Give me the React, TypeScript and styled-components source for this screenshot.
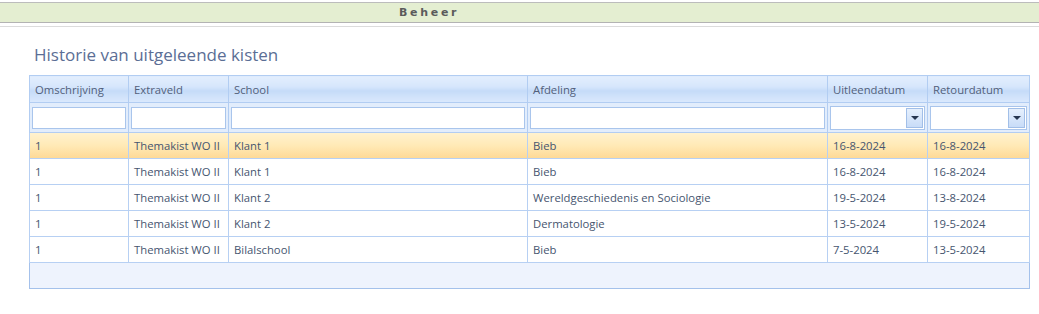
import styled, { createGlobalStyle } from 'styled-components';

const GlobalStyle = createGlobalStyle`
  body {
    margin: 0;
    background: #ffffff;
    font-family: 'Open Sans', 'Noto Sans', sans-serif;
  }
`;

const Page = styled.div`
  padding-top: 2px;
`;

const TopBar = styled.div`
  height: 19px;
  background: #e4eed1;
  border-top: 1px solid #bcbcbc;
  border-bottom: 1px solid #b3b3b3;
  display: flex;
  align-items: center;
  padding-left: 399px;
`;

const TopBarTitle = styled.span`
  font-family: 'DejaVu Sans', Verdana, sans-serif;
  font-size: 11px;
  font-weight: bold;
  letter-spacing: 2.7px;
  color: #5b5b5b;
`;

const Divider = styled.div`
  margin-top: 3px;
  border-top: 1px solid #dcdcdc;
`;

const Content = styled.div`
  padding: 16px 10px 0 29px;
`;

const Title = styled.h1`
  margin: 0 0 8px 5px;
  font-size: 17px;
  font-weight: normal;
  line-height: 24px;
  color: #5b6e95;
`;

const Grid = styled.table`
  width: 1000px;
  border-collapse: collapse;
  table-layout: fixed;
  border: 1px solid #a4c1eb;
  font-size: 11.3px;
  color: #46556f;
`;

const HeaderCell = styled.th`
  height: 26px;
  padding: 0 5px;
  text-align: left;
  font-weight: normal;
  color: #52607a;
  border: 1px solid #b2cdf2;
  background: linear-gradient(#e3eefd 0%, #d6e6fc 40%, #c5dbf8 55%, #dbe9fd 100%);
  white-space: nowrap;
  overflow: hidden;
`;

const FilterCell = styled.td`
  height: 29px;
  padding: 0 2px;
  border: 1px solid #b2cdf2;
  background: #e2edfc;
`;

const FilterInput = styled.input`
  box-sizing: border-box;
  display: block;
  width: 100%;
  height: 22px;
  margin: 0;
  border: 1px solid #a9c5ec;
  background: #ffffff;
  outline: none;
`;

const DateBox = styled.div`
  box-sizing: border-box;
  display: flex;
  justify-content: flex-end;
  align-items: center;
  height: 24px;
  padding: 1px;
  border: 1px solid #a9c5ec;
  background: #ffffff;
`;

const DropButton = styled.div`
  box-sizing: border-box;
  width: 17px;
  height: 20px;
  display: flex;
  align-items: center;
  justify-content: center;
  border: 1px solid #a2bfe8;
  background: linear-gradient(#e6f0fd, #c8dcf8);
`;

const Arrow = styled.span`
  width: 0;
  height: 0;
  border-left: 4px solid transparent;
  border-right: 4px solid transparent;
  border-top: 4px solid #263650;
`;

const Row = styled.tr<{ $selected?: boolean }>`
  background: ${(p) =>
    p.$selected ? 'linear-gradient(#fff2cf 0%, #ffe9b5 50%, #fed894 100%)' : '#ffffff'};
`;

const Cell = styled.td`
  height: 25px;
  padding: 0 5px;
  border: 1px solid #b7d0f3;
  white-space: nowrap;
  overflow: hidden;
`;

const FooterCell = styled.td`
  height: 25px;
  padding: 0;
  background: #eef3fd;
  border: 1px solid #a4c1eb;
`;

const columns = [
  { label: 'Omschrijving', width: 99, date: false },
  { label: 'Extraveld', width: 100, date: false },
  { label: 'School', width: 299, date: false },
  { label: 'Afdeling', width: 300, date: false },
  { label: 'Uitleendatum', width: 100, date: true },
  { label: 'Retourdatum', width: 102, date: true },
];

const rows = [
  ['1', 'Themakist WO II', 'Klant 1', 'Bieb', '16-8-2024', '16-8-2024'],
  ['1', 'Themakist WO II', 'Klant 1', 'Bieb', '16-8-2024', '16-8-2024'],
  ['1', 'Themakist WO II', 'Klant 2', 'Wereldgeschiedenis en Sociologie', '19-5-2024', '13-8-2024'],
  ['1', 'Themakist WO II', 'Klant 2', 'Dermatologie', '13-5-2024', '19-5-2024'],
  ['1', 'Themakist WO II', 'Bilalschool', 'Bieb', '7-5-2024', '13-5-2024'],
];

const App = () => {
  return (
    <Page>
      <GlobalStyle />
      <TopBar>
        <TopBarTitle>Beheer</TopBarTitle>
      </TopBar>
      <Divider />
      <Content>
        <Title>Historie van uitgeleende kisten</Title>
        <Grid>
          <colgroup>
            {columns.map((c) => (
              <col key={c.label} style={{ width: c.width }} />
            ))}
          </colgroup>
          <thead>
            <tr>
              {columns.map((c) => (
                <HeaderCell key={c.label}>{c.label}</HeaderCell>
              ))}
            </tr>
            <tr>
              {columns.map((c) => (
                <FilterCell key={c.label}>
                  {c.date ? (
                    <DateBox>
                      <DropButton>
                        <Arrow />
                      </DropButton>
                    </DateBox>
                  ) : (
                    <FilterInput type="text" />
                  )}
                </FilterCell>
              ))}
            </tr>
          </thead>
          <tbody>
            {rows.map((r, i) => (
              <Row key={i} $selected={i === 0}>
                {r.map((v, j) => (
                  <Cell key={j}>{v}</Cell>
                ))}
              </Row>
            ))}
          </tbody>
          <tfoot>
            <tr>
              <FooterCell colSpan={6} />
            </tr>
          </tfoot>
        </Grid>
      </Content>
    </Page>
  );
};

export default App;
